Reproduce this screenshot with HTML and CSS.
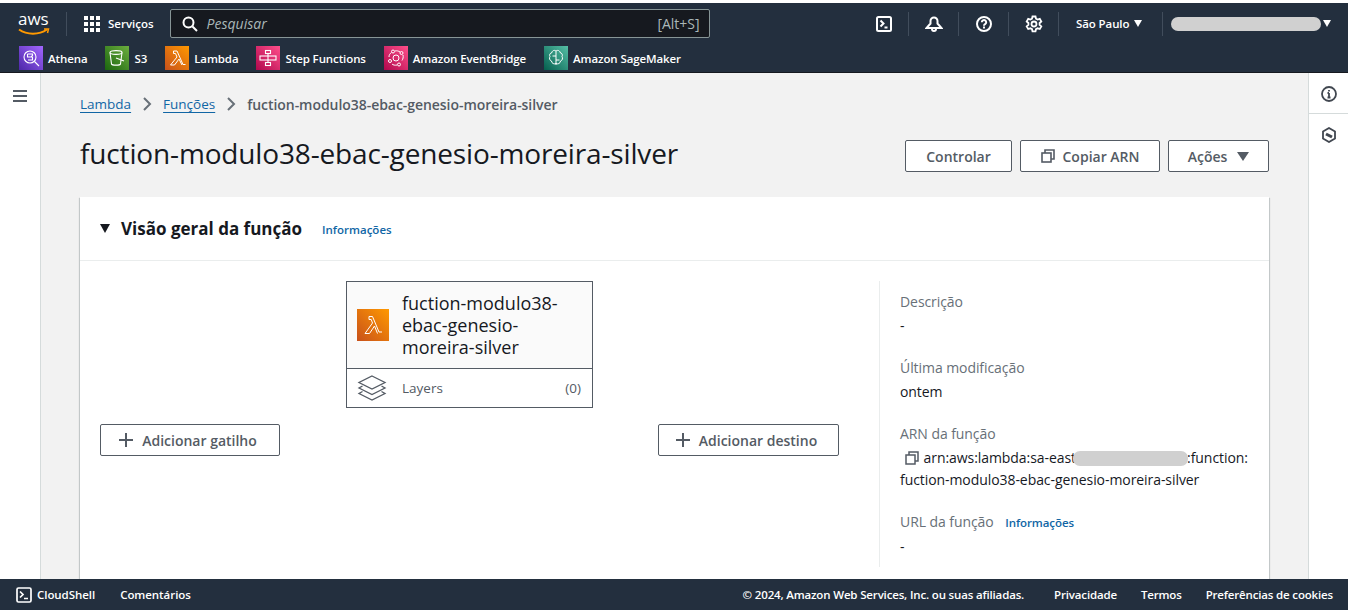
FILE: index.html
```html
<!DOCTYPE html>
<html lang="pt-BR">
<head>
    <meta charset="UTF-8"/>
    <title>fuction-modulo38-ebac-genesio-moreira-silver</title>
    <link rel="stylesheet" href="styles.css">
</head>
<body>
    <header class="topbar">
        <div class="toprow">
            <div class="logo">
                <span class="logo-text">aws</span>
                <svg class="logo-smile" width="32" height="9" viewBox="0 0 32 9" fill="none" stroke="#f90">
                    <path d="M1 1.500c8 5.500 20 5.500 28 0" stroke-width="2"/>
                    <path d="M26 1l4.500 0-1 4" stroke-width="1.500"/>
                </svg>
            </div>
            <span class="topsep first"></span>
            <svg class="grid-icon" width="16" height="16" viewBox="0 0 16 16" fill="#fff">
                <rect x="0" y="0" width="4" height="4"/><rect x="6" y="0" width="4" height="4"/><rect x="12" y="0" width="4" height="4"/>
                <rect x="0" y="6" width="4" height="4"/><rect x="6" y="6" width="4" height="4"/><rect x="12" y="6" width="4" height="4"/>
                <rect x="0" y="12" width="4" height="4"/><rect x="6" y="12" width="4" height="4"/><rect x="12" y="12" width="4" height="4"/>
            </svg>
            <span class="services">Serviços</span>
            <div class="search">
                <svg width="16" height="16" viewBox="0 0 16 16" fill="none" stroke="#fff" stroke-width="2"><circle cx="6.500" cy="6.500" r="5"/><path d="M10.500 10.500l4.500 4.500"/></svg>
                <span class="search-text">Pesquisar</span>
                <span class="search-key">[Alt+S]</span>
            </div>
            <div class="topicons">
                <span class="topicon">
                    <svg width="16" height="16" viewBox="0 0 16 16" fill="none" stroke="#fff" stroke-width="2"><rect x="1" y="1" width="14" height="14" rx="1.500"/><path d="M4.500 4.500l3 3-3 3M8.500 11.500h3"/></svg>
                </span>
                <span class="topicon">
                    <svg width="18" height="18" viewBox="0 0 18 18" fill="none" stroke="#fff" stroke-width="2"><path d="M1.500 13h15l-4-4.500V6a3.500 3.500 0 0 0-7 0v2.500z"/><path d="M7 14a2 2 0 0 0 4 0"/></svg>
                </span>
                <span class="topicon">
                    <svg width="16" height="16" viewBox="0 0 16 16" fill="none" stroke="#fff" stroke-width="2"><circle cx="8" cy="8" r="7"/><path d="M5.800 6.200a2.200 2.200 0 1 1 3.300 2c-.7.400-1.100.8-1.100 1.500M8 10.500v2"/></svg>
                </span>
                <span class="topicon">
                    <svg width="18" height="18" viewBox="0 0 18 18" fill="none" stroke="#fff" stroke-width="1.800"><path d="M7.500 1.500h3l.5 2.200 1.600.9 2.200-.7 1.500 2.600-1.700 1.500v1.900l1.700 1.500-1.500 2.600-2.200-.7-1.600.9-.5 2.200h-3l-.5-2.200-1.600-.9-2.200.7-1.500-2.600 1.700-1.500V8L1.700 6.500l1.500-2.600 2.200.7L7 3.700z"/><circle cx="9" cy="9" r="2.500"/></svg>
                </span>
                <span class="region">São Paulo <i class="caret"></i></span>
                <span class="account"><span class="account-blur"></span><i class="caret"></i></span>
            </div>
        </div>
        <div class="favorites">
            <a class="fav">
                <span class="fav-icon athena">
                    <svg width="20" height="20" viewBox="0 0 20 20" fill="none" stroke="#fff" stroke-width="1.100"><circle cx="9" cy="9" r="6"/><path d="M6.500 6h5v1.500l-1 1 1 1V12h-4.500M6.500 6v3h4M13.500 13.500l4.500 4.500"/></svg>
                </span>Athena</a>
            <a class="fav">
                <span class="fav-icon s3">
                    <svg width="20" height="20" viewBox="0 0 20 20" fill="none" stroke="#fff" stroke-width="1.100"><path d="M3 4.500c0-2.500 12-2.500 12 0l-1.500 11.500c-.5 1.500-8.500 1.500-9 0z"/><path d="M3 4.500c0 2.500 12 2.500 12 0M9 10l8 3"/></svg>
                </span>S3</a>
            <a class="fav">
                <span class="fav-icon lambda">
                    <svg width="20" height="20" viewBox="0 0 20 20" fill="none" stroke="#fff" stroke-width="1"><path d="M6.500 3h3.500l6 13.500h2.500M6.500 3v2.500h2L10 9 3.500 17h4l4.500-6 3 6"/></svg>
                </span>Lambda</a>
            <a class="fav">
                <span class="fav-icon step">
                    <svg width="20" height="20" viewBox="0 0 20 20" fill="none" stroke="#fff" stroke-width="1.100"><rect x="7.500" y="2.500" width="5" height="3"/><rect x="7.500" y="14.500" width="5" height="3"/><rect x="2" y="8" width="16" height="4"/><path d="M10 5.500V8M10 12v2.500M10 8v4"/></svg>
                </span>Step Functions</a>
            <a class="fav">
                <span class="fav-icon step">
                    <svg width="20" height="20" viewBox="0 0 20 20" fill="none" stroke="#fff" stroke-width="1"><circle cx="10" cy="10" r="3"/><circle cx="7" cy="3.500" r="1.500"/><circle cx="15.500" cy="5" r="1.500"/><circle cx="4" cy="13" r="1.500"/><circle cx="13" cy="16.500" r="1.500"/><path d="M3 9c0-2 1-3.500 2.500-4.500M9 3c2-.5 3.500 0 5 1M17 7c.5 2 0 4-1 5.500M11 17c-2 .5-4 0-5-1"/></svg>
                </span>Amazon EventBridge</a>
            <a class="fav">
                <span class="fav-icon sage">
                    <svg width="20" height="20" viewBox="0 0 20 20" fill="none" stroke="#fff" stroke-width="1"><path d="M10 3v14M10 3c-2-1.500-4 0-4 1.500-2 .5-3 2.500-2 4-1 1.500-.5 4 1.500 4.500 0 2.500 3 3.500 4.500 2.500M10 3c2-1.500 4 0 4 1.500 2 .5 3 2.500 2 4 1 1.500.5 4-1.500 4.500 0 2.500-3 3.500-4.500 2.500M6.500 8H10M10 12h3.500"/></svg>
                </span>Amazon SageMaker</a>
        </div>
    </header>

    <div class="workspace">
        <nav class="sidenav">
            <svg width="14" height="12" viewBox="0 0 14 12" stroke="#545b64" stroke-width="2"><path d="M0 1h14M0 6h14M0 11h14"/></svg>
        </nav>

        <main class="content">
            <div class="crumbs">
                <a>Lambda</a>
                <svg class="crumb-arrow" width="10" height="14" viewBox="0 0 10 14" fill="none" stroke="#687078" stroke-width="2"><path d="M2 1l6 6-6 6"/></svg>
                <a>Funções</a>
                <svg class="crumb-arrow" width="10" height="14" viewBox="0 0 10 14" fill="none" stroke="#687078" stroke-width="2"><path d="M2 1l6 6-6 6"/></svg>
                <span class="crumb-current">fuction-modulo38-ebac-genesio-moreira-silver</span>
            </div>

            <div class="page-head">
                <h1>fuction-modulo38-ebac-genesio-moreira-silver</h1>
                <div class="actions">
                    <button class="btn btn-control">Controlar</button>
                    <button class="btn btn-arn">
                        <svg class="copy-icon" width="14" height="14" viewBox="0 0 14 14" fill="none" stroke="#545b64" stroke-width="1.600"><rect x="1" y="4" width="9" height="9"/><path d="M4 4V1h9v9h-3"/></svg>
                        Copiar ARN</button>
                    <button class="btn btn-actions">Ações <i class="caret-big"></i></button>
                </div>
            </div>

            <section class="panel">
                <div class="panel-head">
                    <i class="caret-dark"></i>
                    <h2>Visão geral da função</h2>
                    <a class="info-link">Informações</a>
                </div>
                <div class="panel-body">
                    <div class="diagram">
                        <div class="fn-card">
                            <div class="fn-title">
                                <span class="fn-icon">
                                    <svg width="24" height="24" viewBox="0 0 24 24" fill="none" stroke="#fff" stroke-width="1"><path d="M8 3.500h3.500l6.500 15.500h3M8 3.500v3h2.200l1.300 3.500L4 20.500h4.500l5-7.500 3 7.500"/></svg>
                                </span>
                                <span class="fn-name">fuction-modulo38-ebac-genesio-moreira-silver</span>
                            </div>
                            <div class="fn-layers">
                                <svg width="30" height="26" viewBox="0 0 30 26" fill="none" stroke="#545b64" stroke-width="1.300"><path d="M15 1L28 7.500 15 14 2 7.500z"/><path d="M5.500 11L2 13l13 6.500L28 13l-3.500-2"/><path d="M5.500 16.500L2 18.500 15 25l13-6.500-3.500-2"/></svg>
                                <span class="layers-name">Layers</span>
                                <span class="layers-count">(0)</span>
                            </div>
                        </div>
                        <div class="diagram-buttons">
                            <button class="btn btn-add"><span class="plus"></span>Adicionar gatilho</button>
                            <button class="btn btn-add btn-dest"><span class="plus"></span>Adicionar destino</button>
                        </div>
                    </div>
                    <aside class="details">
                        <div class="detail">
                            <div class="detail-label">Descrição</div>
                            <div class="detail-value">-</div>
                        </div>
                        <div class="detail">
                            <div class="detail-label">Última modificação</div>
                            <div class="detail-value">ontem</div>
                        </div>
                        <div class="detail">
                            <div class="detail-label">ARN da função</div>
                            <div class="detail-value arn">
                                <svg class="arn-copy" width="14" height="14" viewBox="0 0 14 14" fill="none" stroke="#545b64" stroke-width="1.500"><rect x="1" y="4" width="9" height="9"/><path d="M4 4V1h9v9h-3"/></svg>
                                <span class="arn-text">arn:aws:lambda:sa-east-1:000000000000:function:<br>fuction-modulo38-ebac-genesio-moreira-silver<span class="arn-blur"></span></span>
                            </div>
                        </div>
                        <div class="detail">
                            <div class="detail-label">URL da função <a class="info-link url-info">Informações</a></div>
                            <div class="detail-value">-</div>
                        </div>
                    </aside>
                </div>
            </section>
        </main>

        <aside class="siderail">
            <div class="rail-item">
                <svg width="16" height="16" viewBox="0 0 16 16" fill="none" stroke="#414750" stroke-width="1.800"><circle cx="8" cy="8" r="7"/><path d="M8 7v4.500M6.500 11.500h3M6.500 7H8M8 4v1.500"/></svg>
            </div>
            <div class="rail-item">
                <svg width="16" height="16" viewBox="0 0 16 16" fill="none" stroke="#414750" stroke-width="1.800"><path d="M8 1l6 3.500v7L8 15l-6-3.500v-7z"/><path d="M5 7l6 3" stroke-width="3"/></svg>
            </div>
        </aside>
    </div>

    <footer class="footer">
        <svg width="16" height="16" viewBox="0 0 16 16" fill="none" stroke="#fff" stroke-width="1.700"><rect x="1" y="1" width="14" height="14" rx="1.500"/><path d="M4 4.500l3 3-3 3M8 11.500h4"/></svg>
        <span class="foot-cloud">CloudShell</span>
        <span class="foot-comments">Comentários</span>
        <span class="foot-right">© 2024, Amazon Web Services, Inc. ou suas afiliadas.</span>
        <span class="foot-link">Privacidade</span>
        <span class="foot-link">Termos</span>
        <span class="foot-link">Preferências de cookies</span>
    </footer>
</body>
</html>
```

FILE: styles.css
```css
* {
    box-sizing: border-box;
}
html, body {
    height: 100%;
}
body {
    margin: 0;
    display: flex;
    flex-direction: column;
    overflow: hidden;
    padding-top: 3px;
    background: #fff;
    font-family: "Open Sans", Arial, sans-serif;
    font-size: 14px;
    color: #16191f;
}

/* top bar */
.topbar {
    height: 70px;
    flex-shrink: 0;
    background: #232f3e;
    color: #fff;
    border-bottom: 1px solid #16191f;
}
.toprow {
    height: 41px;
    display: flex;
    align-items: center;
    padding: 0 17px 0 18px;
}
.logo {
    width: 36px;
    flex-shrink: 0;
    display: flex;
    flex-direction: column;
}
.logo-text {
    font-size: 17px;
    line-height: 16px;
}
.logo-smile {
    display: block;
    margin-top: 1px;
}
.topsep {
    width: 1px;
    height: 24px;
    background: #414d5c;
}
.topsep.first {
    margin: 0 17px 0 12px;
}
.grid-icon {
    flex-shrink: 0;
}
.services {
    margin-left: 8px;
    font-size: 11.500px;
    font-weight: 600;
}
.search {
    width: 540px;
    height: 29px;
    margin-left: 16px;
    padding: 0 9px 0 11px;
    display: flex;
    align-items: center;
    background: #16191f;
    border: 1px solid #879596;
    border-radius: 2px;
}
.search-text {
    margin-left: 9px;
    font-size: 14px;
    font-style: italic;
    color: #aab7b8;
}
.search-key {
    margin-left: auto;
    font-size: 14px;
    color: #aab7b8;
}
.topicons {
    margin-left: auto;
    display: flex;
    align-items: center;
}
.topicon {
    width: 50px;
    height: 24px;
    display: flex;
    align-items: center;
    justify-content: center;
    border-right: 1px solid #414d5c;
}
.region {
    width: 104px;
    padding-left: 17px;
    height: 24px;
    line-height: 24px;
    font-size: 11.500px;
    font-weight: 600;
    letter-spacing: -0.1px;
    white-space: nowrap;
    border-right: 1px solid #414d5c;
}
.caret {
    display: inline-block;
    width: 0;
    height: 0;
    margin-left: 2px;
    vertical-align: 1px;
    border-left: 4.500px solid transparent;
    border-right: 4.500px solid transparent;
    border-top: 7px solid #fff;
}
.account {
    display: flex;
    align-items: center;
    padding-left: 8px;
}
.account-blur {
    width: 150px;
    height: 14px;
    border-radius: 7px;
    background: #d0d0d0;
}
.favorites {
    height: 28px;
    display: flex;
    align-items: center;
    padding-left: 19px;
    gap: 18px;
}
.fav {
    display: flex;
    align-items: center;
    color: #fff;
    font-size: 11.500px;
    font-weight: 600;
    letter-spacing: -0.1px;
    white-space: nowrap;
}
.fav-icon {
    width: 24px;
    height: 24px;
    margin-right: 5px;
    display: flex;
    align-items: center;
    justify-content: center;
}
.athena {
    background: linear-gradient(45deg, #4d27a8, #a166ff);
}
.s3 {
    background: linear-gradient(45deg, #1b660f, #6cae3e);
}
.lambda {
    background: linear-gradient(45deg, #c8511b, #f90);
}
.step {
    background: linear-gradient(45deg, #b0084d, #ff4f8b);
}
.sage {
    background: linear-gradient(45deg, #055f4e, #56c0a7);
}

/* page */
.workspace {
    flex: 1;
    min-height: 0;
    display: flex;
    background: #f2f2f2;
}
.sidenav {
    width: 41px;
    flex-shrink: 0;
    padding: 14px 0 0 13px;
    background: #fff;
    border-right: 1px solid #d5dbdb;
}
.content {
    flex: 1;
    min-width: 0;
    padding: 0 39px;
    overflow: hidden;
}
.siderail {
    width: 40px;
    flex-shrink: 0;
    background: #fff;
    border-left: 1px solid #d5dbdb;
}
.rail-item {
    height: 41px;
    padding-top: 13px;
    display: flex;
    justify-content: center;
    border-bottom: 1px solid #d5dbdb;
}
.rail-item + .rail-item {
    border-bottom: none;
}
.crumbs {
    height: 24px;
    margin-top: 19px;
    display: flex;
    align-items: center;
    gap: 11px;
    font-size: 14px;
}
.crumbs a {
    font-size: 13.500px;
    color: #1166a5;
    text-decoration: underline;
    text-underline-offset: 3px;
}
.crumb-current {
    font-weight: 600;
    letter-spacing: -0.05px;
    color: #545b64;
}
.page-head {
    height: 42px;
    margin-top: 16px;
    display: flex;
    align-items: center;
    justify-content: space-between;
}
h1 {
    margin: 0;
    font-size: 28px;
    font-weight: 400;
    white-space: nowrap;
    letter-spacing: -0.15px;
}
.actions {
    display: flex;
    gap: 8px;
    margin-top: 6px;
}
.btn {
    height: 32px;
    padding: 0;
    display: inline-flex;
    align-items: center;
    justify-content: center;
    background: #fff;
    border: 1px solid #545b64;
    border-radius: 2px;
    color: #545b64;
    font-family: inherit;
    font-size: 14px;
    font-weight: 600;
    white-space: nowrap;
}
.btn-control {
    width: 107px;
}
.btn-arn {
    width: 140px;
}
.btn-actions {
    width: 101px;
}
.copy-icon {
    flex-shrink: 0;
    margin-right: 8px;
}
.caret-big {
    width: 0;
    height: 0;
    margin-left: 10px;
    border-left: 6px solid transparent;
    border-right: 6px solid transparent;
    border-top: 9px solid #545b64;
}

/* panel */
.panel {
    margin-top: 23px;
    height: 400px;
    background: #fff;
    box-shadow: 0 1px 1px 0 rgba(0, 28, 36, 0.3), 1px 1px 1px 0 rgba(0, 28, 36, 0.15), -1px 1px 1px 0 rgba(0, 28, 36, 0.15);
}
.panel-head {
    height: 64px;
    padding-left: 20px;
    display: flex;
    align-items: center;
    border-bottom: 1px solid #eaeded;
}
.caret-dark {
    width: 0;
    height: 0;
    margin-right: 10px;
    border-left: 5.500px solid transparent;
    border-right: 5.500px solid transparent;
    border-top: 9px solid #16191f;
}
h2 {
    margin: 0 0 0 1px;
    font-size: 17px;
    font-weight: 700;
    color: #16191f;
}
.info-link {
    font-size: 11.500px;
    font-weight: 600;
    color: #1166a5;
}
.panel-head .info-link {
    margin-left: 20px;
    margin-top: 2px;
}
.panel-body {
    display: flex;
    padding: 20px 20px 0;
}
.diagram {
    width: 779px;
    flex-shrink: 0;
    padding-right: 40px;
}
.fn-card {
    width: 247px;
    margin-left: 246px;
    background: #fff;
    border: 1px solid #545b64;
}
.fn-title {
    height: 87px;
    padding: 0 10px;
    display: flex;
    align-items: center;
    background: #fafafa;
    border-bottom: 1px solid #545b64;
}
.fn-icon {
    width: 32px;
    height: 32px;
    flex-shrink: 0;
    margin-right: 13px;
    display: flex;
    align-items: center;
    justify-content: center;
    background: linear-gradient(45deg, #c8511b, #f90);
}
.fn-name {
    font-size: 18px;
    line-height: 22px;
    width: 180px;
}
.fn-layers {
    height: 38px;
    padding: 0 11px 0 10px;
    display: flex;
    align-items: center;
    font-size: 13.500px;
    color: #545b64;
}
.layers-name {
    margin-left: 15px;
}
.layers-count {
    margin-left: auto;
}
.diagram-buttons {
    margin-top: 16px;
    display: flex;
    justify-content: space-between;
}
.btn-add {
    width: 180px;
    padding-right: 4px;
}
.btn-dest {
    width: 181px;
}
.plus {
    width: 14px;
    height: 14px;
    margin-right: 9px;
    background:
        linear-gradient(#545b64, #545b64) center / 14px 2px no-repeat,
        linear-gradient(#545b64, #545b64) center / 2px 14px no-repeat;
}
.details {
    flex: 1;
    height: 286px;
    padding: 11px 0 0 20px;
    border-left: 1px solid #eaeded;
    font-size: 14px;
    letter-spacing: -0.07px;
}
.detail {
    margin-bottom: 21px;
}
.detail-label {
    line-height: 20px;
    color: #687078;
}
.detail-value {
    margin-top: 3px;
    line-height: 22px;
    color: #16191f;
}
.arn {
    position: relative;
}
.arn-copy {
    margin: 0 1px 0 5px;
    vertical-align: -2px;
}
.arn-text {
    white-space: nowrap;
}
.arn-blur {
    position: absolute;
    left: 173px;
    top: 4px;
    width: 115px;
    height: 15px;
    border-radius: 7px;
    background: #d0d0d0;
}
.url-info {
    margin-left: 8px;
}

/* footer */
.footer {
    height: 31px;
    flex-shrink: 0;
    padding: 0 15px 0 16px;
    display: flex;
    align-items: center;
    background: #232f3e;
    color: #fff;
    font-size: 11.500px;
    font-weight: 600;
    letter-spacing: -0.05px;
}
.foot-cloud {
    margin-left: 5px;
}
.foot-comments {
    margin-left: 25px;
}
.foot-right {
    margin-left: auto;
    letter-spacing: -0.16px;
}
.foot-link {
    margin-left: 30px;
    letter-spacing: -0.16px;
}
.foot-link + .foot-link {
    margin-left: 24px;
}
```
